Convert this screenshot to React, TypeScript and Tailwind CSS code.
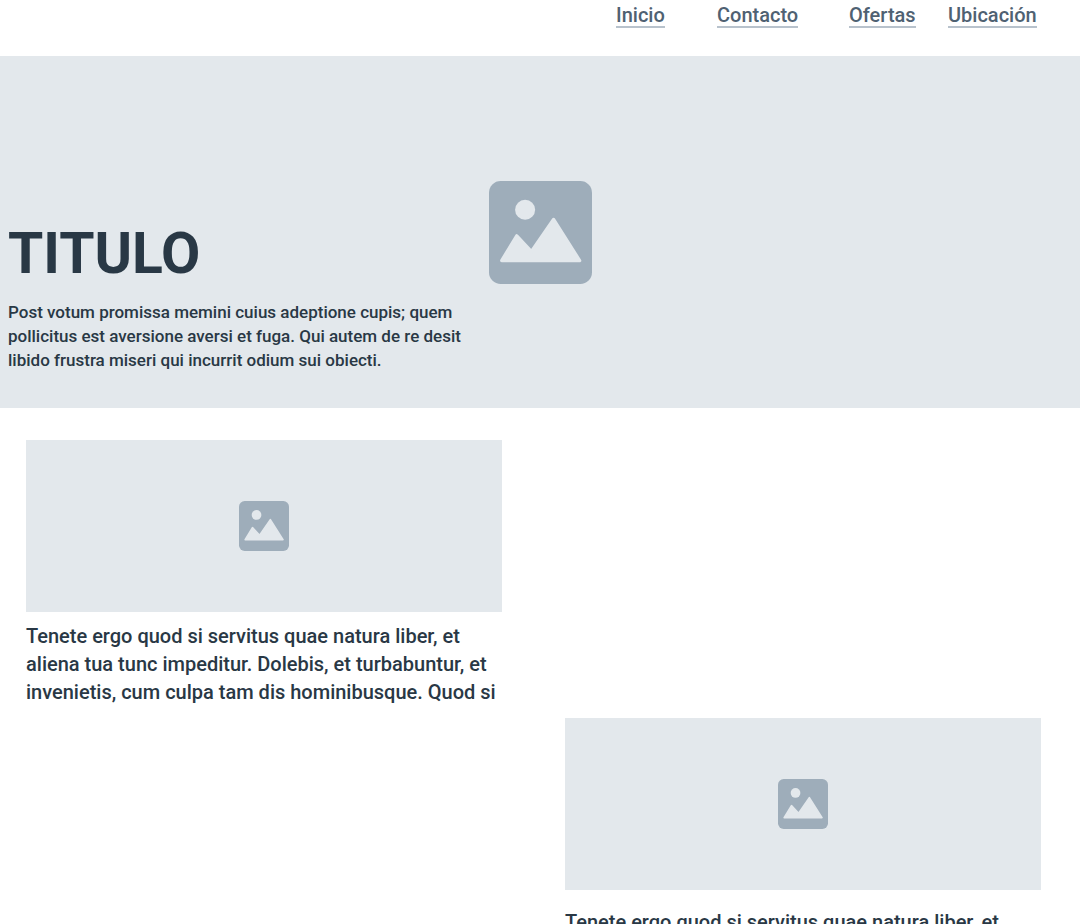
import React from "react";

const links = [
  { label: "Inicio", width: "w-[101px]" },
  { label: "Contacto", width: "w-[132px]" },
  { label: "Ofertas", width: "w-[99px]" },
  { label: "Ubicación", width: "w-[88px]" },
];

function PictureIcon({ className }: { className: string }) {
  return (
    <svg viewBox="0 0 308 308" className={className} aria-hidden="true">
      <rect width="308" height="308" rx="35" fill="#9eadba" />
      <circle cx="108" cy="86" r="30" fill="#e3e8ec" />
      <path
        d="M38 238 L83 164 L127 211 L193 115 L271 238 Z"
        fill="#e3e8ec"
        stroke="#e3e8ec"
        strokeWidth="10"
        strokeLinejoin="round"
      />
    </svg>
  );
}

function Card({ className, textClassName }: { className: string; textClassName: string }) {
  return (
    <article className={className}>
      <div className="flex h-[172px] items-center justify-center bg-[#e3e8ec]">
        <PictureIcon className="size-[50px]" />
      </div>
      <p className={`whitespace-nowrap text-[20px] leading-7 font-medium text-[#293845] ${textClassName}`}>
        Tenete ergo quod si servitus quae natura liber, et
        <br />
        aliena tua tunc impeditur. Dolebis, et turbabuntur, et
        <br />
        invenietis, cum culpa tam dis hominibusque. Quod si
      </p>
    </article>
  );
}

export default function App() {
  return (
    <div className="min-h-screen bg-white font-['Roboto',sans-serif] text-[#293845]">
      <header className="h-14">
        <nav className="flex justify-end pt-1 pr-11">
          {links.map((link) => (
            <div key={link.label} className={link.width}>
              <a
                href="#"
                className="inline-block border-b-2 border-[#b8c2cc] text-[20px] leading-[22px] font-medium text-[#4f6172]"
              >
                {link.label}
              </a>
            </div>
          ))}
        </nav>
      </header>
      <main>
        <section className="grid min-h-[352px] bg-[#e3e8ec]">
          <PictureIcon className="col-start-1 row-start-1 size-[103px] place-self-center" />
          <div className="col-start-1 row-start-1 self-end pb-9 pl-2">
            <h1 className="text-[57px] leading-[68px] font-bold">TITULO</h1>
            <p className="mt-3 text-[17px] leading-6 font-medium">
              Post votum promissa memini cuius adeptione cupis; quem
              <br />
              pollicitus est aversione aversi et fuga. Qui autem de re desit
              <br />
              libido frustra miseri qui incurrit odium sui obiecti.
            </p>
          </div>
        </section>
        <section className="grid grid-cols-2 gap-x-[63px] gap-y-3 pt-8 pr-[39px] pl-[26px]">
          <Card className="col-start-1 row-start-1" textClassName="mt-[10px]" />
          <Card className="col-start-2 row-start-2" textClassName="mt-[18px]" />
        </section>
      </main>
    </div>
  );
}
